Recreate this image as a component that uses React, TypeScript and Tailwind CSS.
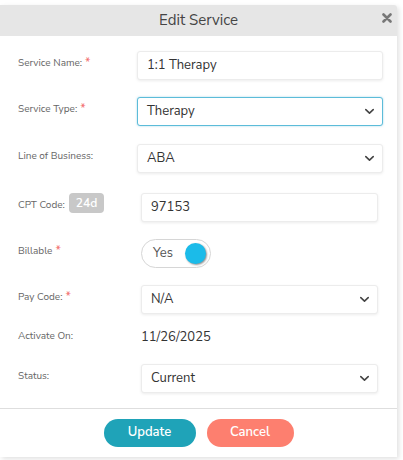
import React from 'react'

const font = { fontFamily: '"Nunito Sans", Lato, "Open Sans", sans-serif' }

function Star() {
  return <span className="ml-[3px] align-top text-[12px] leading-none text-[#f26b6b]">*</span>
}

function Chevron() {
  return (
    <svg width="11" height="7" viewBox="0 0 11 7" className="shrink-0">
      <path d="M1.8 1.6 L5.5 5.1 L9.2 1.6" fill="none" stroke="#444" strokeWidth="1.6" strokeLinecap="round" strokeLinejoin="round" />
    </svg>
  )
}

function Field({ value, select, focused, wide }: { value: string; select?: boolean; focused?: boolean; wide?: boolean }) {
  return (
    <div
      className={`flex h-[29px] shrink-0 items-center justify-between rounded-[3px] border bg-white pl-[9px] pr-[7px] text-[13px] text-[#333] ${
        wide ? 'w-[246px]' : 'w-[237px]'
      } ${focused ? 'border-[#5cbcd9] shadow-[0_0_2px_rgba(60,170,210,0.5)]' : 'border-[#ececec] shadow-[0_1px_3px_rgba(0,0,0,0.08)]'}`}
    >
      <span>{value}</span>
      {select && <Chevron />}
    </div>
  )
}

function Row({ label, required, wide, children, className = '' }: { label: React.ReactNode; required?: boolean; wide?: boolean; children: React.ReactNode; className?: string }) {
  return (
    <div className={`flex h-[29px] items-center ${className}`}>
      <div className={`flex shrink-0 items-center text-[10px] text-[#666] ${wide ? 'w-[119px]' : 'w-[123px]'}`}>
        <span className="-mt-[5px] flex items-start">
          {label}
          {required && <Star />}
        </span>
      </div>
      {children}
    </div>
  )
}

export default function App() {
  return (
    <div className="h-[460px] w-[403px] bg-white pt-[5px]" style={font}>
      <div className="flex h-[452px] w-[397px] flex-col overflow-hidden rounded-tr-[3px] bg-white shadow-[2px_2px_5px_rgba(0,0,0,0.12)]">
        <div className="relative flex h-[31px] shrink-0 items-center justify-center bg-[#e6e6e6]">
          <span className="text-[15px] text-[#444]">Edit Service</span>
          <svg width="10" height="10" viewBox="0 0 10 10" className="absolute right-[5px] top-[8px]">
            <path d="M1.5 1.5 L8.5 8.5 M8.5 1.5 L1.5 8.5" stroke="#777" strokeWidth="2.6" strokeLinecap="round" />
          </svg>
        </div>

        <div className="flex flex-1 flex-col pl-[18px] pt-[15px]">
          <Row label="Service Name:" required wide>
            <Field value="1:1 Therapy" wide />
          </Row>
          <Row label="Service Type:" required wide className="mt-[17px]">
            <Field value="Therapy" select focused wide />
          </Row>
          <Row label="Line of Business:" wide className="mt-[18px]">
            <Field value="ABA" select wide />
          </Row>
          <Row
            label={
              <span className="flex items-center">
                CPT Code:
                <span className="ml-[4px] -mt-[4px] rounded-[4px] bg-[#c8c8c8] px-[7px] py-[1px] text-[12px] font-semibold text-white">24d</span>
              </span>
            }
            className="mt-[20px]"
          >
            <Field value="97153" />
          </Row>
          <Row label="Billable" required className="mt-[17px]">
            <div className="flex h-[29px] w-[70px] items-center justify-between rounded-full border border-[#d6d6d6] bg-white pl-[11px] pr-[4px]">
              <span className="text-[13px] text-[#555]">Yes</span>
              <span className="h-[21px] w-[21px] rounded-full bg-[#1bbbe9] shadow-[1px_1px_2px_rgba(0,0,0,0.45)]" />
            </div>
          </Row>
          <Row label="Pay Code:" required className="mt-[17px]">
            <Field value="N/A" select />
          </Row>
          <Row label="Activate On:" className="mt-[10px]">
            <span className="-mt-[2px] text-[13px] text-[#333]">11/26/2025</span>
          </Row>
          <Row label="Status:" className="mt-[11px]">
            <Field value="Current" select />
          </Row>
        </div>

        <div className="flex h-[49px] shrink-0 items-center justify-center gap-[11px] border-t border-[#dedede]">
          <button className="h-[28px] w-[92px] rounded-full bg-[#1fa3b8] text-[13px] font-semibold text-white">Update</button>
          <button className="h-[28px] w-[87px] rounded-full bg-[#fd7f6f] text-[13px] font-semibold text-white">Cancel</button>
        </div>
      </div>
    </div>
  )
}
